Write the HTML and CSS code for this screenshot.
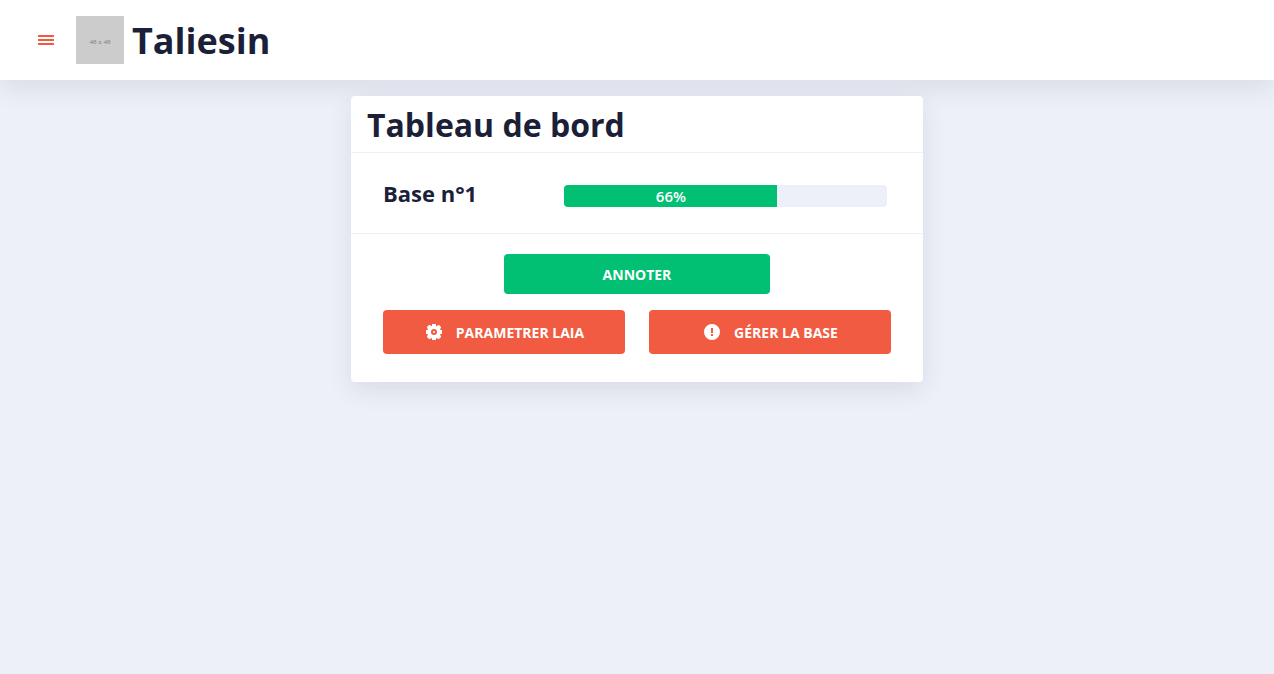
FILE: index.html
```html
<!DOCTYPE html>
<html lang="fr">
<head>
<meta charset="utf-8">
<meta name="viewport" content="width=device-width, initial-scale=1">
<title>Taliesin</title>
<link rel="stylesheet" href="styles.css">
</head>
<body>
<header class="topbar">
  <button class="menu-button" type="button" aria-label="Menu">
    <svg width="16" height="10" viewBox="0 0 16 10" aria-hidden="true"><path d="M0 0h16v2H0zM0 4h16v2H0zM0 8h16v2H0z" fill="currentColor"/></svg>
  </button>
  <div class="logo">48 x 48</div>
  <h1 class="brand">Taliesin</h1>
</header>
<main class="content">
  <section class="card">
    <h2 class="card-title">Tableau de bord</h2>
    <div class="base-row">
      <h3 class="base-name">Base n°1</h3>
      <div class="progress" role="progressbar" aria-label="Base n°1" aria-valuenow="66" aria-valuemin="0" aria-valuemax="100">
        <div class="progress-bar" style="width:66%">66%</div>
      </div>
    </div>
    <div class="actions">
      <button class="button button-success" type="button">ANNOTER</button>
      <div class="button-pair">
        <button class="button button-primary" type="button">
          <svg class="icon" viewBox="0 0 16 16" aria-hidden="true"><path fill="currentColor" fill-rule="evenodd" d="M6 2V0h4v2l1 .4L12 1h1l2 2v1l-1 1 .4 1H16v4h-1.600l-.4 1L15 12v1l-2 2h-1l-1-1-1 .4V16H6v-1.600L5 14l-1 1H3l-2-2v-1l1-1-.4-1H0V6h1.600L2 5 1 4V3l2-2h1l1 1zM8 5a3 3 0 1 0 0 6 3 3 0 1 0 0-6z"/><circle cx="8" cy="8" r="1" fill="currentColor"/></svg>
          PARAMETRER LAIA
        </button>
        <button class="button button-primary" type="button">
          <svg class="icon" viewBox="0 0 16 16" aria-hidden="true"><path fill="currentColor" fill-rule="evenodd" d="M8 0a8 8 0 1 0 0 16A8 8 0 1 0 8 0zM7 4h2v5H7zM7 10h2v2H7z"/></svg>
          GÉRER LA BASE
        </button>
      </div>
    </div>
  </section>
</main>
</body>
</html>
```
FILE: styles.css
```css
* {
  box-sizing: border-box;
}

body {
  margin: 0;
  min-height: 100vh;
  background: #edf0f8;
  color: #1b1f38;
  font-family: "Open Sans", sans-serif;
  font-size: 14px;
}

h1, h2, h3 {
  margin: 0;
  font-weight: 700;
}

.topbar {
  display: flex;
  align-items: center;
  padding: 16px 24px;
  background: #fff;
  box-shadow: 0 8px 24px rgba(27, 50, 60, 0.1);
}

.menu-button {
  display: flex;
  align-items: center;
  justify-content: center;
  width: 44px;
  height: 44px;
  margin-right: 8px;
  padding: 0;
  border: 0;
  background: none;
  color: #f05b41;
}

.logo {
  display: flex;
  align-items: center;
  justify-content: center;
  width: 48px;
  height: 48px;
  margin-right: 8px;
  padding-top: 3px;
  background: #ccc;
  color: #808080;
  font-family: "Liberation Serif", serif;
  font-size: 7px;
}

.brand {
  font-size: 36px;
  line-height: 50px;
  margin-bottom: -2px;
}

.content {
  padding: 16px;
}

.card {
  max-width: 572px;
  margin: 0 auto;
  border-radius: 4px;
  background: #fff;
  box-shadow: 0 8px 24px rgba(27, 50, 60, 0.1);
}

.card-title {
  padding: 9px 16px 7px;
  font-size: 32px;
  line-height: 40px;
}

.base-row {
  display: flex;
  align-items: flex-end;
  gap: 16px;
  padding: 24px 36px 24px 32px;
  border: solid #edf0f8;
  border-width: 1px 0;
}

.base-name {
  flex: 1;
  font-size: 22px;
  line-height: 32px;
}

.progress {
  flex: 0 0 64%;
  margin-bottom: 2px;
  overflow: hidden;
  border-radius: 4px;
  background: #edf0f8;
}

.progress-bar {
  background: #02c073;
  color: #fff;
  font-size: 15px;
  font-weight: 600;
  line-height: 22px;
  text-align: center;
}

.actions {
  display: flex;
  flex-direction: column;
  align-items: center;
  gap: 16px;
  padding: 20px 32px 28px;
}

.button {
  display: flex;
  align-items: center;
  justify-content: center;
  gap: 14px;
  min-height: 40px;
  padding: 0 16px;
  border: 0;
  border-radius: 4px;
  color: #fff;
  font-family: inherit;
  font-size: 14px;
  font-weight: 700;
}

.button-success {
  width: 266px;
  background: #02c073;
}

.button-pair {
  display: flex;
  gap: 24px;
  width: 100%;
}

.button-primary {
  flex: 1;
  min-height: 44px;
  padding: 0 14px 0 16px;
  background: #f05b41;
}

.icon {
  width: 16px;
  height: 16px;
}
```
